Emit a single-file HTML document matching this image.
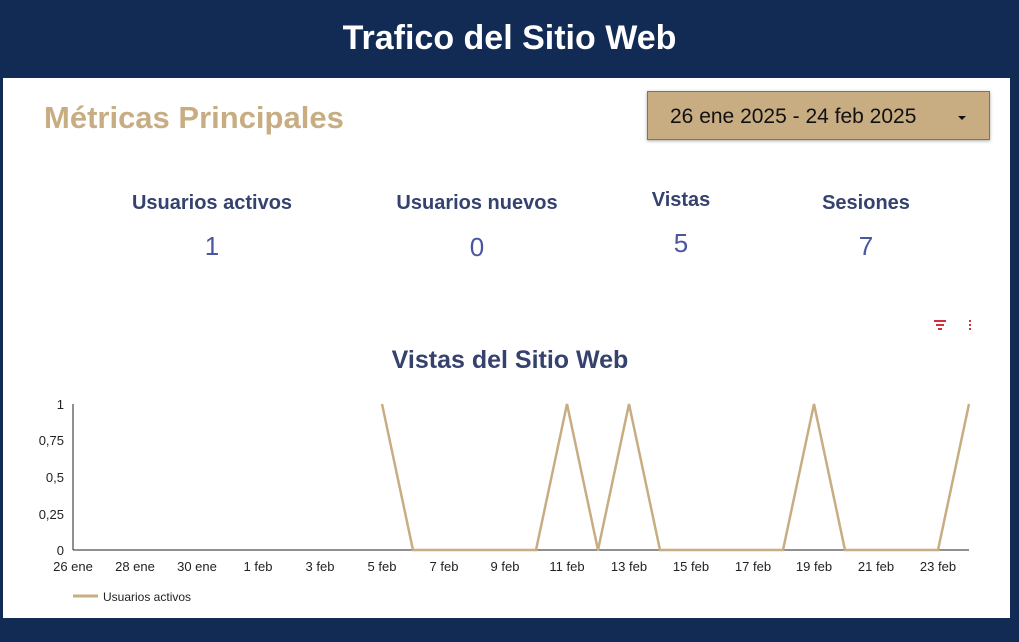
<!DOCTYPE html>
<html><head><meta charset="utf-8"><style>
body{margin:0;width:1019px;height:642px;background:#112b55;font-family:"Liberation Sans",sans-serif;position:relative;overflow:hidden}
.hdr{position:absolute;left:0;top:0;width:1019px;height:78px;color:#fff;font-weight:bold;font-size:34px;text-align:center;line-height:76px}
.panel{position:absolute;left:3px;top:78px;width:1007px;height:540px;background:#fff}
.t{position:absolute;white-space:nowrap}
.lab{color:#36426e;font-weight:bold;font-size:20px;transform:translateX(-50%)}
.val{color:#4a56a0;font-size:26px;transform:translateX(-50%)}
</style></head><body>
<div class="hdr">Trafico del Sitio Web</div>
<div class="panel"></div>
<div class="t" style="left:44px;top:100px;color:#c8ad83;font-weight:bold;font-size:31px">Métricas Principales</div>
<div class="t" style="left:647px;top:91px;width:343px;height:49px;background:#c8ad83;border:1px solid #8a7250;box-shadow:0 1px 3px rgba(0,0,0,.35);box-sizing:border-box"></div>
<div class="t" style="left:670px;top:105px;font-size:21px;color:#111">26 ene 2025 - 24 feb 2025</div>
<div class="t" style="left:958px;top:116px;width:0;height:0;border-left:4px solid transparent;border-right:4px solid transparent;border-top:4px solid #111"></div>
<div class="t lab" style="left:212px;top:192px">Usuarios activos</div>
<div class="t val" style="left:212px;top:231px">1</div>
<div class="t lab" style="left:477px;top:192px">Usuarios nuevos</div>
<div class="t val" style="left:477px;top:232px">0</div>
<div class="t lab" style="left:681px;top:189px">Vistas</div>
<div class="t val" style="left:681px;top:228px">5</div>
<div class="t lab" style="left:866px;top:192px">Sesiones</div>
<div class="t val" style="left:866px;top:231px">7</div>
<svg class="t" style="left:930px;top:316px" width="50" height="20"><g fill="#d0303a"><rect x="4" y="4" width="12" height="2"/><rect x="6" y="8" width="8" height="2"/><rect x="8" y="12" width="4" height="2"/><rect x="39" y="4" width="2" height="2"/><rect x="39" y="8" width="2" height="2"/><rect x="39" y="12" width="2" height="2"/></g></svg>
<div class="t" style="left:510px;top:346px;transform:translateX(-50%);color:#36426e;font-weight:bold;font-size:25px">Vistas del Sitio Web</div>
<svg class="t" style="left:0;top:390px" width="1019" height="220" font-family="Liberation Sans" font-size="13" fill="#222">
<line x1="73" y1="14" x2="73" y2="160" stroke="#222" stroke-width="1"/>
<line x1="73" y1="160" x2="969" y2="160" stroke="#222" stroke-width="1"/>
<g text-anchor="end"><text x="64" y="19">1</text><text x="64" y="55">0,75</text><text x="64" y="92">0,5</text><text x="64" y="129">0,25</text><text x="64" y="165">0</text></g>
<g text-anchor="middle"><text x="73" y="181">26 ene</text><text x="135" y="181">28 ene</text><text x="197" y="181">30 ene</text><text x="258" y="181">1 feb</text><text x="320" y="181">3 feb</text><text x="382" y="181">5 feb</text><text x="444" y="181">7 feb</text><text x="505" y="181">9 feb</text><text x="567" y="181">11 feb</text><text x="629" y="181">13 feb</text><text x="691" y="181">15 feb</text><text x="753" y="181">17 feb</text><text x="814" y="181">19 feb</text><text x="876" y="181">21 feb</text><text x="938" y="181">23 feb</text></g>
<polyline fill="none" stroke="#c8ad83" stroke-width="2.5" points="382,14 413,160 536,160 567,14 598,160 629,14 660,160 783,160 814,14 845,160 938,160 969,14"/>
<line x1="73" y1="206" x2="98" y2="206" stroke="#c8ad83" stroke-width="3"/>
<text x="103" y="211" font-size="12">Usuarios activos</text>
</svg>
</body></html>
